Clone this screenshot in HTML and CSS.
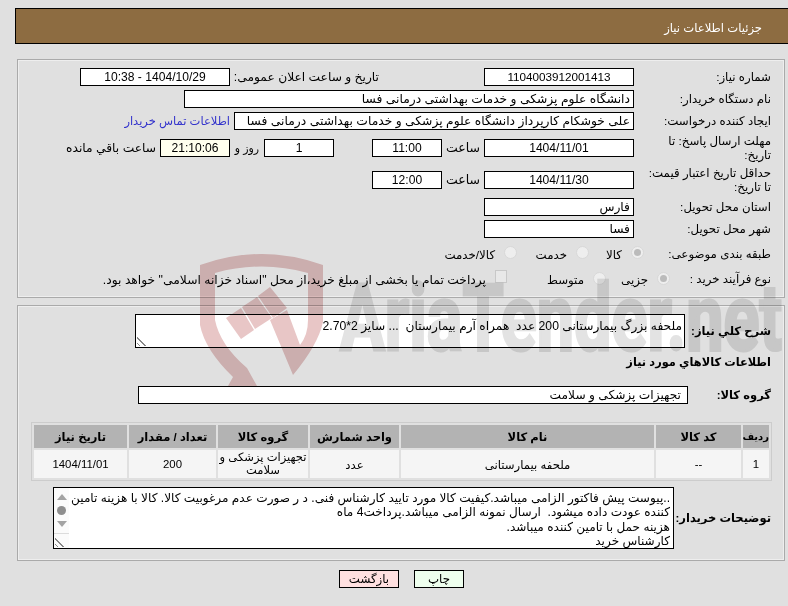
FILE: index.html
```html
<!DOCTYPE html>
<html lang="fa" dir="rtl">
<head>
<meta charset="utf-8">
<title>جزئیات اطلاعات نیاز</title>
<link rel="stylesheet" href="styles.css">
</head>
<body>
<div class="page">
  <header class="head"><span>جزئیات اطلاعات نیاز</span></header>

  <section class="panel top">
    <div class="row r22">
      <div class="lab">شماره نیاز:</div>
      <div class="box w150 c num id">1104003912001413</div>
      <div class="lab2">تاریخ و ساعت اعلان عمومی:</div>
      <div class="box w150 c num">1404/10/29 - 10:38</div>
    </div>
    <div class="row r22">
      <div class="lab">نام دستگاه خریدار:</div>
      <div class="box w450">دانشگاه علوم پزشکی و خدمات بهداشتی درمانی فسا</div>
    </div>
    <div class="row r22">
      <div class="lab">ایجاد کننده درخواست:</div>
      <div class="box w400">علی خوشکام کارپرداز دانشگاه علوم پزشکی و خدمات بهداشتی درمانی فسا</div>
      <a class="link">اطلاعات تماس خریدار</a>
    </div>
    <div class="row r32">
      <div class="lab">مهلت ارسال پاسخ: تا<br>تاریخ:</div>
      <div class="box w150 c num">1404/11/01</div>
      <div class="sa">ساعت</div>
      <div class="box w70 c num">11:00</div>
      <div class="gap"></div>
      <div class="box w70 c num">1</div>
      <div class="ro">روز و</div>
      <div class="box w70 c cream num">21:10:06</div>
      <div class="rem">ساعت باقي مانده</div>
    </div>
    <div class="row r32">
      <div class="lab">حداقل تاریخ اعتبار قیمت:<br>تا تاریخ:</div>
      <div class="box w150 c num">1404/11/30</div>
      <div class="sa">ساعت</div>
      <div class="box w70 c num">12:00</div>
    </div>
    <div class="row r22">
      <div class="lab">استان محل تحویل:</div>
      <div class="box w150">فارس</div>
    </div>
    <div class="row r22">
      <div class="lab">شهر محل تحویل:</div>
      <div class="box w150">فسا</div>
    </div>
    <div class="row r22 cat">
      <div class="lab lab-cat">طبقه بندی موضوعی:</div>
      <div class="opt o1"><i class="radio on"></i><span>کالا</span></div>
      <div class="opt o2"><i class="radio"></i><span>خدمت</span></div>
      <div class="opt"><i class="radio"></i><span>کالا/خدمت</span></div>
    </div>
    <div class="row r22 proc">
      <div class="lab lab-proc">نوع فرآیند خرید :</div>
      <div class="opt o3"><i class="radio on"></i><span>جزیی</span></div>
      <div class="opt o4"><i class="radio"></i><span>متوسط</span></div>
      <div class="opt o5"><i class="check"></i><span>پرداخت تمام یا بخشی از مبلغ خرید،از محل "اسناد خزانه اسلامی" خواهد بود.</span></div>
    </div>
  </section>

  <section class="panel bottom">
    <div class="row need">
      <div class="lab b">شرح کلي نیاز:</div>
      <div class="area">ملحفه بزرگ بیمارستانی 200 عدد&nbsp; همراه آرم بیمارستان&nbsp; ... سایز 2*2.70<i class="grip"></i></div>
    </div>
    <h2 class="title">اطلاعات کالاهاي مورد نیاز</h2>
    <div class="row group">
      <div class="lab b">گروه کالا:</div>
      <div class="box w550">تجهیزات پزشکی و سلامت</div>
    </div>
    <table class="grid">
      <thead>
        <tr><th class="t1">رديف</th><th class="t2">کد کالا</th><th class="t3">نام کالا</th><th class="t4">واحد شمارش</th><th class="t5">گروه کالا</th><th class="t6">تعداد / مقدار</th><th class="t7">تاریخ نیاز</th></tr>
      </thead>
      <tbody>
        <tr><td class="dg">1</td><td class="dg">--</td><td>ملحفه بیمارستانی</td><td>عدد</td><td class="grp">تجهیزات پزشکی و<br>سلامت</td><td class="dg">200</td><td class="dg">1404/11/01</td></tr>
      </tbody>
    </table>
    <div class="row notes">
      <div class="lab b">توضیحات خریدار:</div>
      <div class="area big">
        <div class="txt">..پیوست پیش فاکتور الزامی میباشد.کیفیت کالا مورد تایید کارشناس فنی. د ر صورت عدم مرغوبیت کالا. کالا با هزینه تامین<br>کننده عودت داده میشود.&nbsp; ارسال نمونه الزامی میباشد.پرداخت4 ماه<br>هزینه حمل با تامین کننده میباشد.<br>کارشناس خرید</div>
        <div class="scroll"><b class="up"></b><b class="dot"></b><b class="down"></b><b class="sep"></b><i class="grip"></i></div>
      </div>
    </div>
  </section>

  <div class="btns">
    <button class="btn print">چاپ</button>
    <button class="btn back">بازگشت</button>
  </div>

  <svg class="mark" viewBox="190 250 598 136" aria-hidden="true">
    <path class="red" d="M200 265 Q262 243 323 265 L323 322 Q318 345 293 375 L270 320 L287 310 L300 345 Q308 335 308 320 L308 273 Q262 260 215 273 L215 320 Q220 345 247 368 L257 386 L228 386 L233 377 Q205 350 200 325 Z"/>
    <polygon class="red" points="226,318 241,308 254,330 241,339"/>
    <polygon class="red" points="242,307 257,297 272,318 255,329"/>
    <polygon class="red" points="258,296 270,287 287,308 273,318"/>
    <text class="brand" x="340" y="350" textLength="442" lengthAdjust="spacingAndGlyphs" direction="ltr">AriaTender.net</text>
  </svg>
</div>
</body>
</html>
```
FILE: styles.css
```css
* { box-sizing: border-box; }
html, body { margin: 0; padding: 0; }
body { background: #e0e0e0; font-family: "Liberation Sans", "DejaVu Sans", sans-serif; font-size: 11.8px; color: #000; }
.page { position: relative; width: 788px; height: 606px; padding: 8px 0 0 15px; overflow: hidden; }
.head { height: 36px; background: #8d6c41; border: 1px solid #000; border-right: 0; color: #fff; padding-right: 26px; line-height: 38px; font-size: 11.6px; }
.panel { border: 1px solid #aaa; box-shadow: inset 0 0 0 1px #eee; width: 768px; margin-right: 3px; }
.top { margin-top: 15px; height: 239px; padding-top: 6px; }
.bottom { height: 256px; margin-top: 7px; padding-top: 8px; }
.row { display: flex; align-items: center; }
.r22 { height: 22px; }
.r32 { height: 32px; line-height: 14px; }
.lab { width: 150px; padding-right: 13px; flex: none; }
.b { font-weight: bold; font-size: 11.5px; }
.box { height: 18px; background: #fff; border: 1px solid #000; line-height: 16px; padding: 0 3px; flex: none; white-space: nowrap; overflow: hidden; font-size: 12.3px; }
.c { text-align: center; }
.num { font-size: 12.1px; }
.id { font-size: 11.7px; }
.w150 { width: 150px; }
.w450 { width: 450px; }
.w400 { width: 400px; }
.w70 { width: 70px; }
.w550 { width: 550px; padding-right: 6px; font-size: 12.2px; }
.lab2 { width: 254px; padding-right: 105px; font-size: 12.25px; }
.link { color: #3333cc; margin-right: 4px; font-size: 11.5px; }
.sa { width: 42px; text-align: center; font-size: 12.5px; }
.gap { width: 38px; }
.ro { width: 34px; text-align: center; font-size: 11px; }
.cream { background: #ffffee; }
.rem { margin-right: 4px; font-size: 12.25px; }
.cat { margin-top: 1px; }
.proc { margin-top: 4px; }
.lab-cat { width: 140px; padding-top: 4px; }
.lab-proc { width: 114px; padding-top: 2px; }
.opt { display: flex; align-items: center; gap: 9px; flex: none; }
.opt span { padding-top: 4px; }
.cat .opt span { padding-top: 6px; }
.o1 { width: 55px; }
.o2 { width: 72px; }
.o3 { width: 64px; }
.o4 { width: 99px; }
.o5 { font-size: 12.3px; gap: 8px; }
.radio { width: 13px; height: 13px; border-radius: 50%; background: #eee; border: 1px solid #d8d8d8; flex: none; position: relative; }
.radio.on::after { content: ""; position: absolute; inset: 2px; border-radius: 50%; background: #bbb; }
.check { width: 12px; height: 13px; background: #e8e8e8; border: 1px solid #c8c8c8; flex: none; margin-left: 1px; margin-bottom: 4px; }
.area { position: relative; width: 550px; height: 34px; background: #fff; border: 1px solid #000; padding: 4px 2px 0; line-height: 15px; flex: none; font-size: 12.2px; }
.need { height: 34px; }
.need .lab { width: 99px; }
.grip { position: absolute; left: 1px; bottom: 1px; width: 9px; height: 9px; background: linear-gradient(45deg, transparent 12%, #888 12% 22%, transparent 22% 42%, #888 42% 52%, transparent 52%); }
.title { font-size: 11.4px; font-weight: bold; margin: 7px 13px 0 0; height: 14px; line-height: 14px; }
.group { margin-top: 17px; height: 18px; }
.group .lab { width: 96px; }
.grid { border-collapse: separate; border-spacing: 2px; border: 1px solid #ccc; width: 741px; margin: 18px 12px 0 0; font-size: 11.7px; table-layout: fixed; }
.grid th { background: #b3b3b3; height: 23px; padding: 0; font-weight: bold; font-size: 11.5px; }
.grid td { background: #f5f5f5; height: 28px; padding: 0 2px; text-align: center; line-height: 13px; }
.grid td.dg { font-size: 11.4px; }
.grid td.grp { padding: 0; white-space: nowrap; font-size: 11.5px; }
.grid th.t1 { font-size: 10px; }
.t1 { width: 26px; } .t2 { width: 85px; } .t3 { width: 253px; } .t4 { width: 89px; } .t5 { width: 90px; } .t6 { width: 87px; } .t7 { width: 93px; }
.notes { margin-top: 6px; }
.notes .lab { width: 110px; white-space: nowrap; }
.big { width: 621px; height: 62px; padding: 0; display: flex; }
.txt { flex: 1; padding: 3px 3px 0 0; font-size: 12.1px; line-height: 14.3px; white-space: nowrap; overflow: hidden; }
.scroll { position: relative; width: 15px; flex: none; display: flex; flex-direction: column; align-items: center; background: #fbfbfb; padding-top: 6px; }
.up { border: 5px solid transparent; border-top: 0; border-bottom: 6px solid #a3a3a3; flex: none; }
.dot { width: 9px; height: 9px; border-radius: 50%; background: #8e8e8e; margin-top: 6px; flex: none; }
.down { border: 5px solid transparent; border-bottom: 0; border-top: 6px solid #a3a3a3; margin-top: 6px; flex: none; }
.sep { width: 100%; height: 1px; background: #dcdcdc; margin-top: 6px; flex: none; }
.btns { display: flex; justify-content: center; gap: 15px; margin-top: 9px; }
.btn { width: 50px; height: 18px; border: 1px solid #000; padding: 0; font: inherit; color: #000; }
.print { background: #eeffee; }
.back { background: #ffe0e0; width: 60px; }
.mark { position: absolute; left: 190px; top: 250px; width: 598px; height: 136px; pointer-events: none; mix-blend-mode: multiply; }
.red { fill: #e8c6c6; }
.brand { fill: #e3e3e3; stroke: #e3e3e3; stroke-width: 3px; font-family: Roboto, "Liberation Sans", sans-serif; font-weight: 700; font-size: 92px; }
```
